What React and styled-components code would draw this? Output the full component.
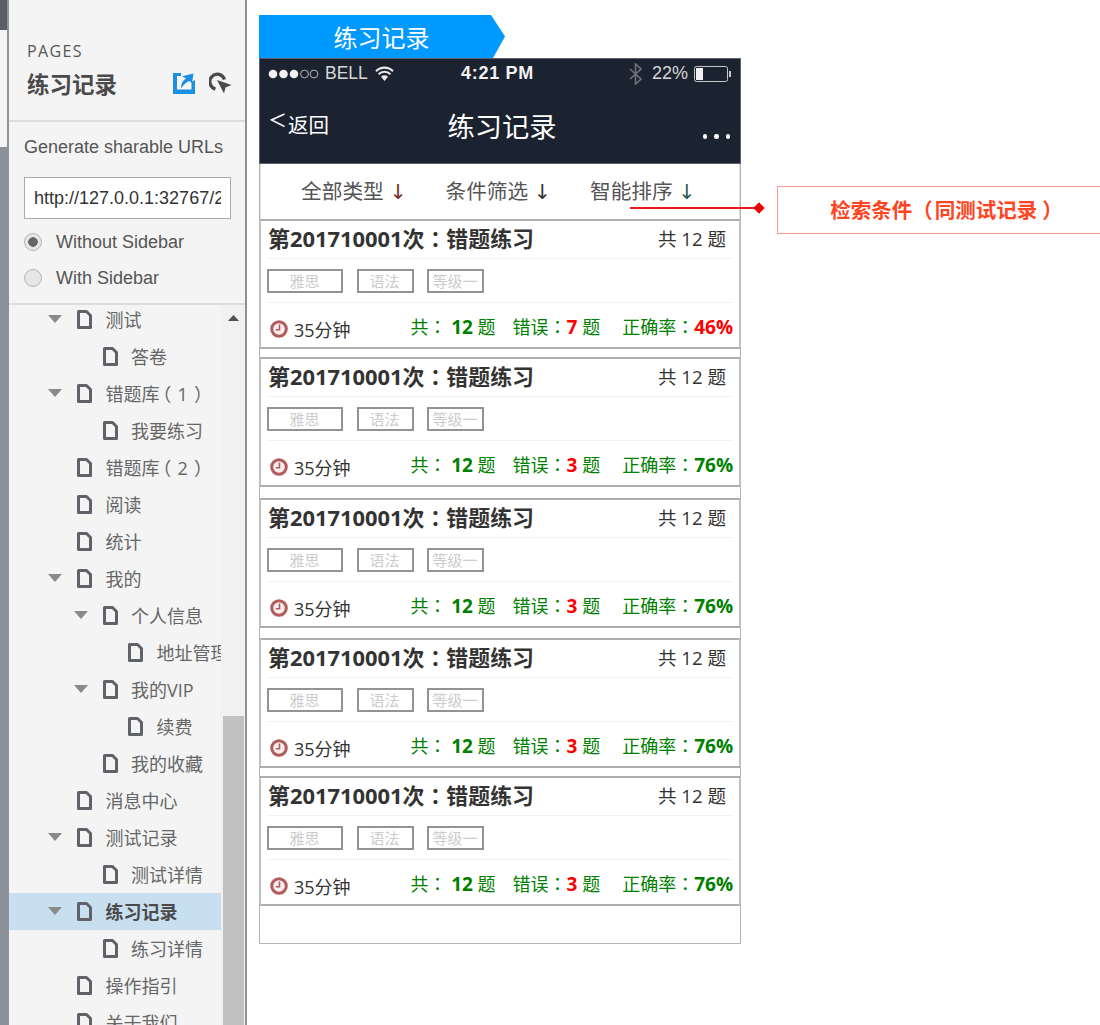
import React from 'react'
import styled, { createGlobalStyle } from 'styled-components'

const FONT = `"Open Sans", "Noto Sans CJK SC", sans-serif`
const ARIAL = `"Liberation Sans", "Noto Sans CJK SC", sans-serif`

const Global = createGlobalStyle`
    html, body {
        margin: 0;
        padding: 0;
        height: 100%;
        overflow: hidden;
        background: #fff;
    }
    * { box-sizing: border-box; }
`

const Page = styled.div`
    display: flex;
    width: 1100px;
    height: 1025px;
    overflow: hidden;
    font-family: ${FONT};
`

const Rail = styled.div`
    width: 9px;
    flex: none;
    display: flex;
    flex-direction: column;
    background: #8d9199;
`
const RailTop = styled.div`
    height: 30px;
    background: #5b5e63;
    margin-right: 2px;
`
const RailLight = styled.div`
    height: 117px;
    background: #f4f4f4;
    margin-right: 2px;
`

const Sidebar = styled.aside`
    width: 238px;
    flex: none;
    height: 100%;
    display: flex;
    flex-direction: column;
    background: #f4f4f4;
    border-right: 2px solid #8d9199;
`
const Head = styled.div`
    height: 122px;
    flex: none;
    padding: 40px 13px 0 18px;
    border-bottom: 2px solid #dcdcdc;
`
const PagesLabel = styled.div`
    font-size: 16px;
    line-height: 22px;
    letter-spacing: 1.4px;
    color: #555;
`
const TitleRow = styled.div`
    display: flex;
    align-items: center;
    margin-top: 4px;
    height: 34px;
`
const PageTitle = styled.div`
    flex: 1;
    font-size: 22.5px;
    font-weight: 700;
    color: #4a4a4a;
`
const HeadIcons = styled.div`
    display: flex;
    align-items: center;
    gap: 14px;
`
const Share = styled.div`
    height: 183px;
    flex: none;
    padding: 13px 14px 0 15px;
    border-bottom: 2px solid #dcdcdc;
`
const ShareLabel = styled.div`
    font-family: ${ARIAL};
    font-size: 18px;
    line-height: 24px;
    color: #555;
`
const UrlBox = styled.div`
    margin: 18px 0 5px;
    width: 207px;
    height: 42px;
    padding: 0 9px;
    display: flex;
    align-items: center;
    background: #fff;
    border: 1px solid #a9a9a9;
    font-family: ${ARIAL};
    font-size: 18px;
    color: #333;
    overflow: hidden;
    white-space: nowrap;
`
const UrlText = styled.div`
    overflow: hidden;
    width: 100%;
`
const RadioRow = styled.div`
    display: flex;
    align-items: center;
    height: 36px;
    font-family: ${ARIAL};
    font-size: 18px;
    color: #555;
`
const RadioDot = styled.span`
    width: 18px;
    height: 18px;
    margin-right: 14px;
    border-radius: 50%;
    border: 1px solid #b4b4b4;
    background: ${p => p.$on ? 'radial-gradient(circle, #666 0 4.5px, #e6e6e6 5px)' : '#e6e6e6'};
`
const Tree = styled.div`
    position: relative;
    flex: 1;
    min-height: 0;
    display: flex;
    overflow: hidden;
`
const TreeList = styled.div`
    width: 212px;
    flex: none;
    margin-top: -4px;
    overflow: hidden;
`
const Row = styled.div`
    display: flex;
    align-items: center;
    height: 37px;
    width: 212px;
    padding-left: ${p => 39 + (p.$level - 1) * 25.5}px;
    padding-bottom: 1px;
    background: ${p => p.$sel ? '#c8dff0' : 'transparent'};
    font-size: 18px;
    font-weight: ${p => p.$sel ? 700 : 400};
    color: ${p => p.$sel ? '#4a4a4a' : '#666'};
    white-space: nowrap;
    overflow: hidden;
`
const CaretSlot = styled.div`
    width: 29px;
    flex: none;
    display: flex;
    align-items: center;
`
const Punct = styled.span`
    font-family: "Noto Sans CJK TC", sans-serif;
`
const RowLabel = styled.span`
    margin-left: 13.5px;
    ${Punct}[data-p='（'] {
        display: inline-block;
        width: 1em;
        text-indent: -0.35em;
    }
    ${Punct}[data-p='）'] {
        display: inline-block;
        width: 1em;
        text-indent: 0.35em;
    }
`
const ScrollTrack = styled.div`
    flex: 1;
    display: flex;
    flex-direction: column;
    align-items: stretch;
    background: #f1f1f1;
`
const ScrollUp = styled.div`
    height: 411px;
    display: flex;
    justify-content: center;
    padding-top: 10px;
`
const ScrollThumb = styled.div`
    flex: 1;
    margin: 0 1px 0 2px;
    background: #c1c1c1;
`

const Main = styled.main`
    position: relative;
    flex: 1;
    padding: 15px 0 0 12px;
`
const Banner = styled.div`
    width: 246px;
    height: 43px;
    padding-right: 1px;
    display: flex;
    align-items: center;
    justify-content: center;
    background: #0099ff;
    clip-path: polygon(0 0, 232px 0, 100% 50%, 234px 100%, 0 100%);
    font-size: 24px;
    color: #fff;
`
const Phone = styled.div`
    width: 482px;
    height: 886px;
    border: 1px solid #b4b4b4;
    border-top: none;
`
const PhoneHead = styled.div`
    height: 106px;
    margin: 0 -1px;
    background: #1c2330;
    border: 1px solid #5d626b;
    color: #fff;
`
const StatusBar = styled.div`
    display: grid;
    grid-template-columns: 1fr auto 1fr;
    align-items: center;
    height: 29px;
    padding: 0 9px 0 8px;
    font-family: ${ARIAL};
    font-size: 17.5px;
    color: #d8d8d8;
`
const StatusLeft = styled.div`
    display: flex;
    align-items: center;
`
const StatusRight = styled.div`
    display: flex;
    align-items: center;
    justify-content: flex-end;
    font-size: 18px;
`
const StatusGap = styled.span`
    width: ${p => p.$w}px;
`
const Time = styled.div`
    color: #f2f2f2;
    font-weight: 700;
    font-size: 18px;
    letter-spacing: 0.7px;
    padding-right: 4px;
`
const Nav = styled.div`
    display: grid;
    grid-template-columns: 1fr auto 1fr;
    align-items: center;
    height: 75px;
    padding: 3px 7px 5px 10px;
`
const Back = styled.div`
    display: flex;
    align-items: center;
    font-size: 20.5px;
    padding-bottom: 2px;
`
const NavTitle = styled.div`
    font-size: 27.3px;
    padding-left: 1px;
`
const More = styled.div`
    display: flex;
    justify-content: flex-end;
    gap: 7px;
    padding: 24px 3px 0 0;
`
const MoreDot = styled.span`
    width: 4.5px;
    height: 4.5px;
    border-radius: 50%;
    background: #fff;
`
const FilterBar = styled.div`
    display: flex;
    align-items: center;
    height: 55px;
    padding: 0 0 4px 40px;
    gap: 39px;
    font-size: 20.7px;
    color: #555;
    border-left: 1px solid #e0e0e0;
    border-right: 1px solid #e0e0e0;
`
const FilterItem = styled.span`
    white-space: nowrap;
`
const Arrow = styled.span`
    font-family: "DejaVu Sans", sans-serif;
    color: ${p => p.$c};
`

const Card = styled.div`
    margin: ${p => p.$gap}px -1px 0;
    height: 130px;
    padding: 0 6px 0 6px;
    border: 2px solid #aeaeae;
    border-left-color: #c0c0c0;
    border-right-color: #c0c0c0;
`
const CardTop = styled.div`
    display: flex;
    align-items: center;
    justify-content: space-between;
    height: 38px;
    border-bottom: 1px solid #f2f2f2;
    padding: 0 7px 5px 1px;
`
const CardTitle = styled.div`
    font-size: 21.9px;
    font-weight: 700;
    color: #333;
`
const CardCount = styled.div`
    font-size: 18.6px;
    color: #333;
    padding-top: 1px;
`
const Tags = styled.div`
    display: flex;
    align-items: center;
    gap: 13.5px;
    height: 44px;
    border-bottom: 1px solid #f2f2f2;
`
const Tag = styled.span`
    width: ${p => p.$w}px;
    height: 24px;
    padding: 0 1px 1px 0;
    display: flex;
    align-items: center;
    justify-content: center;
    border: 2px solid #939393;
    font-size: 15px;
    color: #ccc;
`
const CardFoot = styled.div`
    display: flex;
    align-items: center;
    justify-content: space-between;
    height: 44px;
    padding: 0 0 0 3px;
`
const Duration = styled.div`
    display: flex;
    align-items: center;
    gap: 6px;
    font-size: 18px;
    color: #333;
    padding-top: 8px;
`
const Stats = styled.div`
    display: flex;
    color: green;
    font-size: 18px;
    white-space: pre;
    padding-top: 2px;
`
const Stat = styled.span`
    margin-left: ${p => p.$ml || 0}px;
`
const Num = styled.b`
    color: ${p => p.$c || 'green'};
    font-weight: 700;
    font-size: 19px;
`

const Leader = styled.div`
    position: absolute;
    left: 383px;
    top: 207px;
    width: 127px;
    height: 1.5px;
    background: #f01818;
`
const Diamond = styled.div`
    position: absolute;
    left: 508px;
    top: 204px;
    width: 8px;
    height: 8px;
    background: #ee0000;
    transform: rotate(45deg);
`
const Note = styled.div`
    position: absolute;
    left: 530px;
    top: 186px;
    width: 332px;
    height: 48px;
    padding: 0 0 3px 7px;
    display: flex;
    align-items: center;
    justify-content: center;
    background: #fff;
    border: 1px solid #ff9d8a;
    font-size: 20.5px;
    font-weight: 700;
    color: #ff4422;
    ${Punct}[data-p='（'] {
        margin-right: 2px;
    }
    ${Punct}[data-p='）'] {
        margin-left: 5px;
    }
`
const NoteText = styled.span`
    white-space: nowrap;
`

// fullwidth colon and brackets sit centred in the reference
const cjk = (text) => text.split(/([：（）])/).map((part, i) => (
    i % 2 ? <Punct key={i} data-p={part}>{part}</Punct> : part
))

const PageIcon = () => (
    <svg width="15" height="19" viewBox="0 0 15 19" style={{ flex: 'none' }}>
        <path d="M1.5 1.5H9.5L13.5 5.5V17.5H1.5Z" fill="none" stroke="#5f6268" strokeWidth="3" strokeLinejoin="round" />
    </svg>
)

const Caret = () => (
    <svg width="14" height="8" viewBox="0 0 14 8">
        <path d="M0 0H14L7 8Z" fill="#8a8a8a" />
    </svg>
)

const ShareIcon = () => (
    <svg width="22" height="21" viewBox="0 0 22 21">
        <path d="M0 0H8V3H4V16.5H18.5V9L22 7V21H0Z" fill="#1a8fe3" />
        <path d="M9 3.2L20.5 0.5L19 10L16 8C12.5 10 10 12 8 15.5C8 11 9.5 7.5 13 5.5Z" fill="#1a8fe3" />
    </svg>
)

const CursorIcon = () => (
    <svg width="23" height="22" viewBox="0 0 23 22">
        <path d="M6.5 17A7.5 7.5 0 1 1 15.5 7.5" fill="none" stroke="#4a4a4a" strokeWidth="3.2" />
        <path d="M8 8L22.5 13L16.5 15.5L15 21.5Z" fill="#4a4a4a" />
    </svg>
)

const Clock = () => (
    <svg width="18" height="18" viewBox="0 0 18 18">
        <circle cx="9" cy="9" r="7.3" fill="#fbeeee" stroke="#b05c5c" strokeWidth="3" />
        <path d="M9.5 4.5V9.8H5.8" fill="none" stroke="#b05c5c" strokeWidth="1.6" />
    </svg>
)

const Wifi = () => (
    <svg width="19" height="15" viewBox="0 0 19 15">
        <path d="M1 5.2a12 12 0 0 1 17 0M3.6 8.2a8.2 8.2 0 0 1 11.8 0" fill="none" stroke="#e8e8e8" strokeWidth="2.1" />
        <path d="M6 10.8a5 5 0 0 1 7 0L9.5 15Z" fill="#e8e8e8" />
    </svg>
)

const Bluetooth = () => (
    <svg width="13" height="22" viewBox="0 0 13 22">
        <path d="M1 6L12 16L6.5 21V1L12 6L1 16" fill="none" stroke="#6d7279" strokeWidth="1.6" />
    </svg>
)

const Battery = () => (
    <svg width="37" height="16" viewBox="0 0 37 16">
        <rect x="0.5" y="0.5" width="33" height="15" rx="2" fill="none" stroke="#c8c8c8" />
        <rect x="2" y="2" width="7" height="12" fill="#f2f2f2" />
        <rect x="35" y="5" width="2" height="6" fill="#c8c8c8" />
    </svg>
)

const Signal = () => (
    <svg width="51" height="10" viewBox="0 0 51 10" style={{ marginRight: 6 }}>
        {[5, 15.5, 26].map(x => <circle key={x} cx={x} cy="5" r="4.3" fill="#f2f2f2" />)}
        {[36.5, 46].map(x => <circle key={x} cx={x} cy="5" r="3.9" fill="none" stroke="#b4b4b4" />)}
    </svg>
)

const BackChevron = () => (
    <svg width="16" height="15" viewBox="0 0 16 15" style={{ margin: '0 2px 6px 0' }}>
        <path d="M14.5 1L1.5 7L14.5 13.5" fill="none" stroke="#fff" strokeWidth="1.5" />
    </svg>
)

const UpArrow = () => (
    <svg width="11" height="6" viewBox="0 0 11 6">
        <path d="M0 6H11L5.5 0Z" fill="#4f4f4f" />
    </svg>
)

const pages = [
    { name: '测试', level: 1, caret: true },
    { name: '答卷', level: 2 },
    { name: '错题库（1）', level: 1, caret: true },
    { name: '我要练习', level: 2 },
    { name: '错题库（2）', level: 1 },
    { name: '阅读', level: 1 },
    { name: '统计', level: 1 },
    { name: '我的', level: 1, caret: true },
    { name: '个人信息', level: 2, caret: true },
    { name: '地址管理', level: 3 },
    { name: '我的VIP', level: 2, caret: true },
    { name: '续费', level: 3 },
    { name: '我的收藏', level: 2 },
    { name: '消息中心', level: 1 },
    { name: '测试记录', level: 1, caret: true },
    { name: '测试详情', level: 2 },
    { name: '练习记录', level: 1, caret: true, sel: true },
    { name: '练习详情', level: 2 },
    { name: '操作指引', level: 1 },
    { name: '关于我们', level: 1 },
]

const records = [
    { gap: 0, wrong: 7, rate: 46, rateColor: 'red' },
    { gap: 8, wrong: 3, rate: 76 },
    { gap: 11, wrong: 3, rate: 76 },
    { gap: 10, wrong: 3, rate: 76 },
    { gap: 8, wrong: 3, rate: 76 },
]

function App() {
    return (
        <Page>
            <Global />
            <Rail>
                <RailTop />
                <RailLight />
            </Rail>
            <Sidebar>
                <Head>
                    <PagesLabel>PAGES</PagesLabel>
                    <TitleRow>
                        <PageTitle>练习记录</PageTitle>
                        <HeadIcons>
                            <ShareIcon />
                            <CursorIcon />
                        </HeadIcons>
                    </TitleRow>
                </Head>
                <Share>
                    <ShareLabel>Generate sharable URLs</ShareLabel>
                    <UrlBox><UrlText>http://127.0.0.1:32767/2</UrlText></UrlBox>
                    <RadioRow><RadioDot $on />Without Sidebar</RadioRow>
                    <RadioRow><RadioDot />With Sidebar</RadioRow>
                </Share>
                <Tree>
                    <TreeList>
                        {pages.map(p => (
                            <Row key={p.name} $level={p.level} $sel={p.sel}>
                                <CaretSlot>{p.caret && <Caret />}</CaretSlot>
                                <PageIcon />
                                <RowLabel>{cjk(p.name)}</RowLabel>
                            </Row>
                        ))}
                    </TreeList>
                    <ScrollTrack>
                        <ScrollUp><UpArrow /></ScrollUp>
                        <ScrollThumb />
                    </ScrollTrack>
                </Tree>
            </Sidebar>
            <Main>
                <Banner>练习记录</Banner>
                <Phone>
                    <PhoneHead>
                        <StatusBar>
                            <StatusLeft><Signal />BELL<StatusGap $w={7} /><Wifi /></StatusLeft>
                            <Time>4:21 PM</Time>
                            <StatusRight><Bluetooth /><StatusGap $w={10} />22%<StatusGap $w={6} /><Battery /></StatusRight>
                        </StatusBar>
                        <Nav>
                            <Back><BackChevron />返回</Back>
                            <NavTitle>练习记录</NavTitle>
                            <More><MoreDot /><MoreDot /><MoreDot /></More>
                        </Nav>
                    </PhoneHead>
                    <FilterBar>
                        <FilterItem>全部类型 <Arrow $c="#7a2a2a">↓</Arrow></FilterItem>
                        <FilterItem>条件筛选 <Arrow $c="#333">↓</Arrow></FilterItem>
                        <FilterItem>智能排序 <Arrow $c="#2a5a50">↓</Arrow></FilterItem>
                    </FilterBar>
                    {records.map((r, i) => (
                        <Card key={i} $gap={r.gap}>
                            <CardTop>
                                <CardTitle>{cjk('第201710001次：错题练习')}</CardTitle>
                                <CardCount>共 12 题</CardCount>
                            </CardTop>
                            <Tags>
                                <Tag $w={76}>雅思</Tag>
                                <Tag $w={57}>语法</Tag>
                                <Tag $w={57}>等级一</Tag>
                            </Tags>
                            <CardFoot>
                                <Duration><Clock />35分钟</Duration>
                                <Stats>
                                    <Stat>{cjk('共：')} <Num>12</Num> 题</Stat>
                                    <Stat $ml={17}>{cjk('错误：')}<Num $c="red">{r.wrong}</Num> 题</Stat>
                                    <Stat $ml={22}>{cjk('正确率：')}<Num $c={r.rateColor}>{r.rate}%</Num></Stat>
                                </Stats>
                            </CardFoot>
                        </Card>
                    ))}
                </Phone>
                <Leader />
                <Diamond />
                <Note><NoteText>{cjk('检索条件（同测试记录）')}</NoteText></Note>
            </Main>
        </Page>
    )
}

export default App
